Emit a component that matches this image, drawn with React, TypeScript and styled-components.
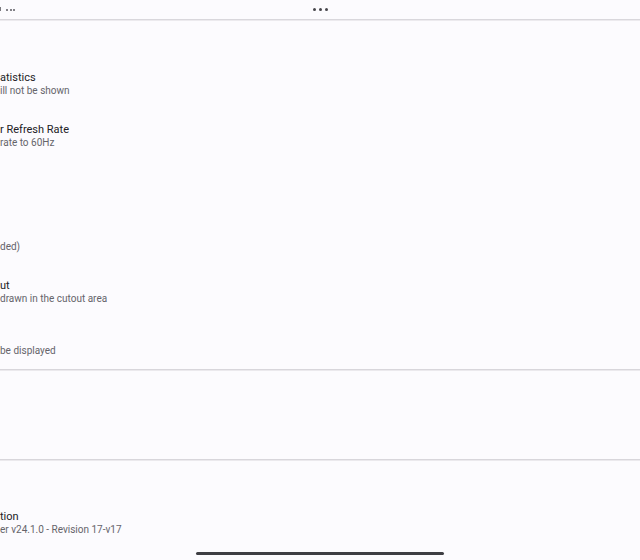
import React from "react";
import styled, { createGlobalStyle } from "styled-components";

const Global = createGlobalStyle`
  html, body { margin: 0; padding: 0; background: #fcfbfe; }
  body { font-family: Roboto, "Noto Sans", "Liberation Sans", sans-serif; overflow: hidden; }
`;

const Screen = styled.div`
  position: relative;
  width: 640px;
  height: 560px;
  background: #fcfbfe;
  overflow: hidden;
`;

const TopBar = styled.div`
  height: 19px;
  display: flex;
  align-items: center;
  position: relative;
  border-bottom: 1px solid #d9d7dc;
  box-shadow: 0 1px 0 #eceaee;
`;

const LeftGroup = styled.div`
  display: flex;
  align-items: center;
  gap: 5px;
  width: 300px;
`;

const Bang = styled.span`
  width: 1px;
  height: 4px;
  background: #7a797e;
  margin-top: -1px;
`;

const Dots = styled.div<{ $size: number; $gap: number; $color: string }>`
  display: flex;
  gap: ${(p) => p.$gap}px;
  align-items: center;
  & > span {
    width: ${(p) => p.$size}px;
    height: ${(p) => p.$size}px;
    border-radius: 50%;
    background: ${(p) => p.$color};
  }
`;

const CenterGroup = styled.div`
  display: flex;
  justify-content: center;
  width: 40px;
`;

const Section = styled.div`
  display: flex;
  flex-direction: column;
`;

const Spacer = styled.div<{ $h: number }>`
  height: ${(p) => p.$h}px;
`;

const Row = styled.div`
  height: 52px;
  display: flex;
  flex-direction: column;
  justify-content: center;
`;

const Title = styled.div`
  font-size: 11px;
  line-height: 14px;
  padding-top: 1px;
  color: #222125;
  white-space: nowrap;
`;

const Sub = styled.div`
  font-size: 10px;
  line-height: 13px;
  margin-top: -1px;
  color: #65646a;
  white-space: nowrap;
`;

const Divider = styled.div`
  height: 1px;
  background: #d8d6db;
  box-shadow: 0 1px 0 #ebe9ed;
`;

const HomeIndicator = styled.div`
  position: absolute;
  left: 196px;
  bottom: 5px;
  width: 248px;
  height: 3px;
  border-radius: 2px;
  background: #3e3e43;
`;

type Item = { title?: string; sub?: string };

const rows: Item[] = [
  { title: "atistics", sub: "ill not be shown" },
  { title: "r Refresh Rate", sub: "rate to 60Hz" },
  {},
  { sub: "ded)" },
  { title: "ut", sub: "drawn in the cutout area" },
  { sub: "be displayed" },
];

function SettingRow({ title, sub }: Item) {
  return (
    <Row>
      <Title>{title ?? "\u00a0"}</Title>
      <Sub>{sub ?? "\u00a0"}</Sub>
    </Row>
  );
}

export default function App() {
  return (
    <Screen>
      <Global />
      <TopBar>
        <LeftGroup>
          <Bang />
          <Dots $size={2} $gap={1.5} $color="#5b5a60">
            <span />
            <span />
            <span />
          </Dots>
        </LeftGroup>
        <CenterGroup>
          <Dots $size={3} $gap={3} $color="#47464b">
            <span />
            <span />
            <span />
          </Dots>
        </CenterGroup>
      </TopBar>
      <Section>
        <Spacer $h={37} />
        {rows.map((r, i) => (
          <SettingRow key={i} {...r} />
        ))}
      </Section>
      <Divider />
      <Section>
        <Spacer $h={89} />
      </Section>
      <Divider />
      <Section>
        <Spacer $h={36} />
        <SettingRow title="tion" sub="er v24.1.0 - Revision 17-v17" />
      </Section>
      <HomeIndicator />
    </Screen>
  );
}
